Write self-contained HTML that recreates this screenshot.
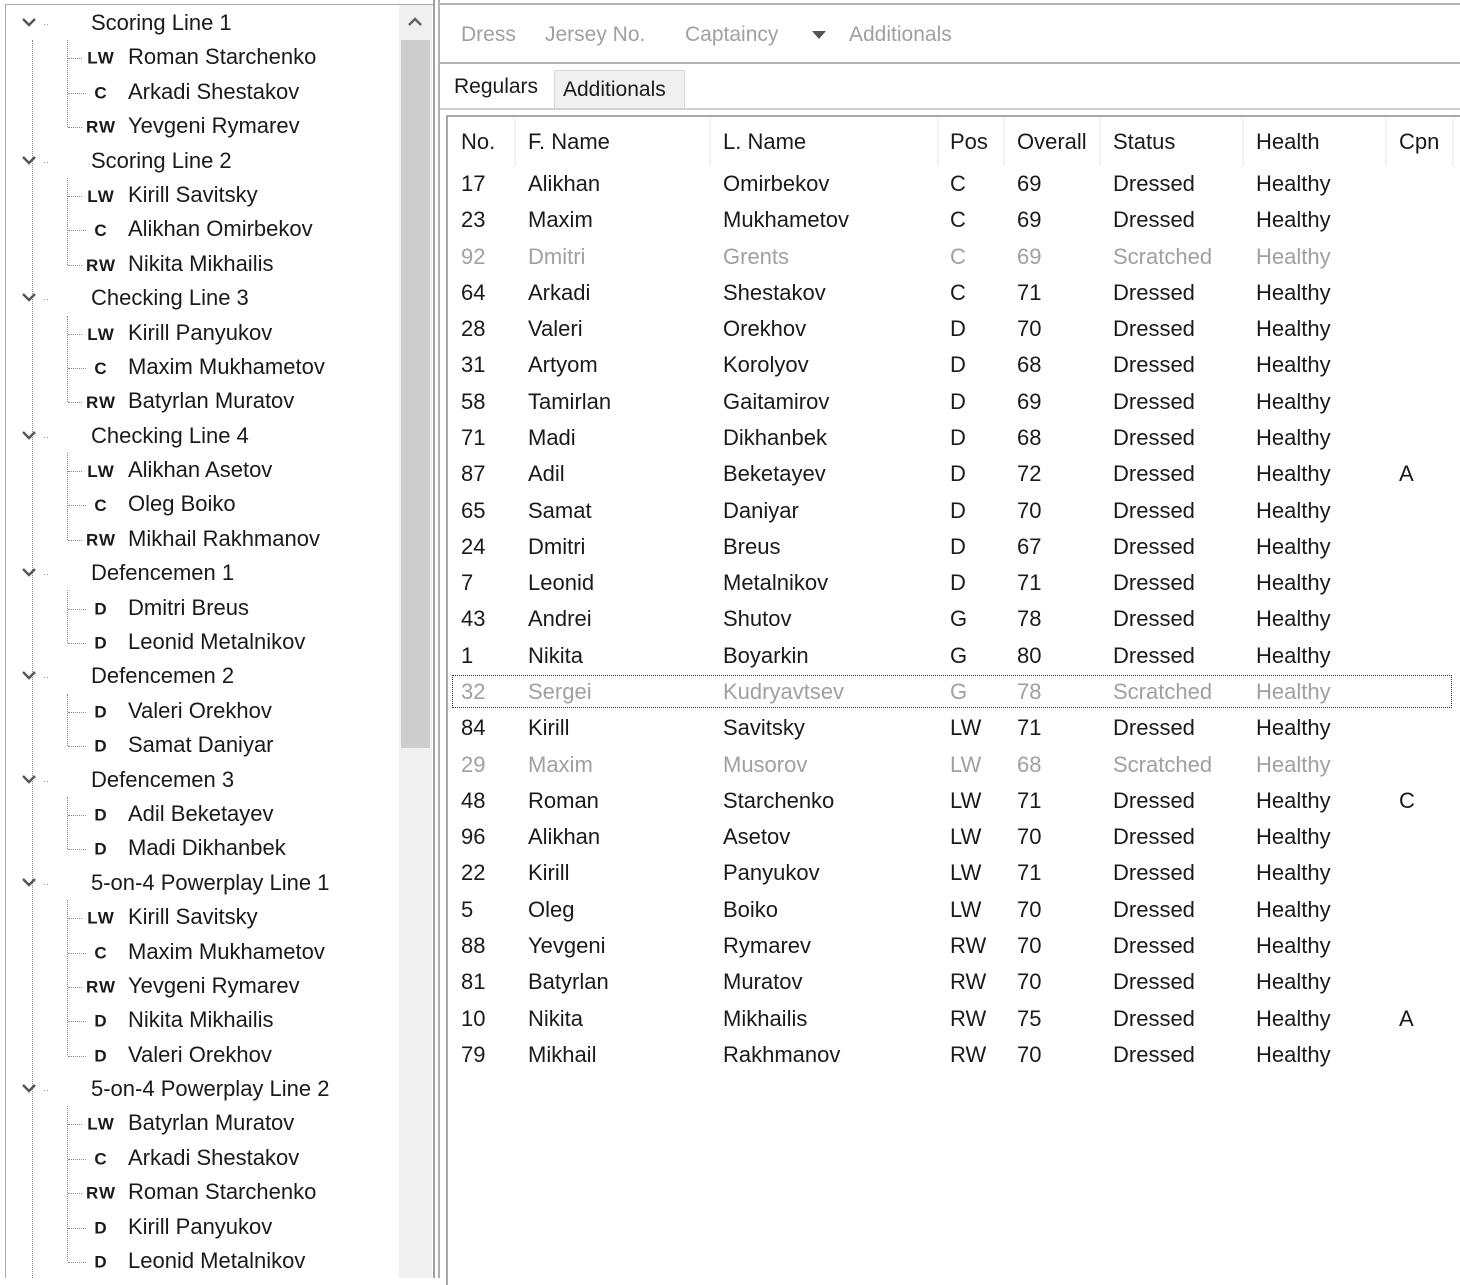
<!DOCTYPE html>
<html><head><meta charset="utf-8"><style>
*{margin:0;padding:0;box-sizing:border-box}
body{width:1460px;height:1278px;overflow:hidden;background:#fff;font-family:"Liberation Sans",sans-serif;color:#1a1a1a;position:relative}
.a{position:absolute;white-space:nowrap}
.t{font-size:22px;line-height:34px;height:34px}
.g{left:91px}
.n{left:128px}
.p{font-family:"Liberation Sans",sans-serif;font-weight:bold;font-size:17px;line-height:34px;width:36px;text-align:center;left:83px;letter-spacing:1px;transform:scaleY(0.95)}
.h{left:68px;width:18px;border-top:1px dotted #888}
.v{border-left:1px dotted #888;width:0}
.r{font-size:22px;line-height:36px;height:36px}
.gr{color:#a0a0a0}
</style></head><body>
<div class="a" style="left:5px;top:4px;width:429px;height:1274px;border:1px solid #a8a8a8;border-bottom:none"></div>
<div class="a" style="left:399px;top:5px;width:33px;height:1273px;background:#f0f0f0"></div>
<div class="a" style="left:401px;top:40px;width:29px;height:708px;background:#cdcdcd"></div>
<svg class="a" style="left:405px;top:14px" width="20" height="16"><path d="M4 11 L10 5 L16 11" stroke="#606060" stroke-width="2.5" fill="none"/></svg>
<div class="a" style="left:433px;top:0;width:2px;height:1278px;background:#a0a0a0"></div>
<div class="a v" style="left:32px;top:40px;height:1238px"></div>
<div class="a v" style="left:67px;top:40px;height:87px"></div>
<div class="a v" style="left:67px;top:178px;height:87px"></div>
<div class="a v" style="left:67px;top:316px;height:86px"></div>
<div class="a v" style="left:67px;top:453px;height:87px"></div>
<div class="a v" style="left:67px;top:590px;height:53px"></div>
<div class="a v" style="left:67px;top:694px;height:52px"></div>
<div class="a v" style="left:67px;top:797px;height:52px"></div>
<div class="a v" style="left:67px;top:900px;height:155px"></div>
<div class="a v" style="left:67px;top:1106px;height:155px"></div>

<div id="tree">
<div class="a t g" style="top:6px">Scoring Line 1</div>
<div class="a t g" style="top:144px">Scoring Line 2</div>
<div class="a t g" style="top:281px">Checking Line 3</div>
<div class="a t g" style="top:419px">Checking Line 4</div>
<div class="a t g" style="top:556px">Defencemen 1</div>
<div class="a t g" style="top:659px">Defencemen 2</div>
<div class="a t g" style="top:763px">Defencemen 3</div>
<div class="a t g" style="top:866px">5-on-4 Powerplay Line 1</div>
<div class="a t g" style="top:1072px">5-on-4 Powerplay Line 2</div>
<svg class="a" style="left:18px;top:0" width="40" height="1278">
<g stroke="#555" stroke-width="2.4" fill="none">
<path d="M5 19 L11 25 L17 19"/><path d="M5 157 L11 163 L17 157"/><path d="M5 294 L11 300 L17 294"/><path d="M5 432 L11 438 L17 432"/><path d="M5 569 L11 575 L17 569"/><path d="M5 672 L11 678 L17 672"/><path d="M5 776 L11 782 L17 776"/><path d="M5 879 L11 885 L17 879"/><path d="M5 1085 L11 1091 L17 1085"/>
</g>
<g fill="#999"><rect x="26" y="24" width="1" height="1"/><rect x="29" y="24" width="1" height="1"/><rect x="26" y="162" width="1" height="1"/><rect x="29" y="162" width="1" height="1"/><rect x="26" y="299" width="1" height="1"/><rect x="29" y="299" width="1" height="1"/><rect x="26" y="437" width="1" height="1"/><rect x="29" y="437" width="1" height="1"/><rect x="26" y="574" width="1" height="1"/><rect x="29" y="574" width="1" height="1"/><rect x="26" y="677" width="1" height="1"/><rect x="29" y="677" width="1" height="1"/><rect x="26" y="781" width="1" height="1"/><rect x="29" y="781" width="1" height="1"/><rect x="26" y="884" width="1" height="1"/><rect x="29" y="884" width="1" height="1"/><rect x="26" y="1090" width="1" height="1"/><rect x="29" y="1090" width="1" height="1"/></g>
</svg>
<div class="a h" style="top:58px"></div><div class="a h" style="top:93px"></div><div class="a h" style="top:127px"></div>
<div class="a h" style="top:196px"></div><div class="a h" style="top:230px"></div><div class="a h" style="top:265px"></div>
<div class="a h" style="top:334px"></div><div class="a h" style="top:368px"></div><div class="a h" style="top:402px"></div>
<div class="a h" style="top:471px"></div><div class="a h" style="top:505px"></div><div class="a h" style="top:540px"></div>
<div class="a h" style="top:609px"></div><div class="a h" style="top:643px"></div>
<div class="a h" style="top:712px"></div><div class="a h" style="top:746px"></div>
<div class="a h" style="top:815px"></div><div class="a h" style="top:849px"></div>
<div class="a h" style="top:918px"></div><div class="a h" style="top:953px"></div><div class="a h" style="top:987px"></div><div class="a h" style="top:1021px"></div><div class="a h" style="top:1056px"></div>
<div class="a h" style="top:1124px"></div><div class="a h" style="top:1159px"></div><div class="a h" style="top:1193px"></div><div class="a h" style="top:1228px"></div><div class="a h" style="top:1262px"></div>

<div class="a p" style="top:42px;background:#fff">LW</div><div class="a t n" style="top:40px">Roman Starchenko</div>
<div class="a p" style="top:77px">C</div><div class="a t n" style="top:75px">Arkadi Shestakov</div>
<div class="a p" style="top:111px;background:#fff">RW</div><div class="a t n" style="top:109px">Yevgeni Rymarev</div>
<div class="a p" style="top:180px;background:#fff">LW</div><div class="a t n" style="top:178px">Kirill Savitsky</div>
<div class="a p" style="top:214px">C</div><div class="a t n" style="top:212px">Alikhan Omirbekov</div>
<div class="a p" style="top:249px;background:#fff">RW</div><div class="a t n" style="top:247px">Nikita Mikhailis</div>
<div class="a p" style="top:318px;background:#fff">LW</div><div class="a t n" style="top:316px">Kirill Panyukov</div>
<div class="a p" style="top:352px">C</div><div class="a t n" style="top:350px">Maxim Mukhametov</div>
<div class="a p" style="top:386px;background:#fff">RW</div><div class="a t n" style="top:384px">Batyrlan Muratov</div>
<div class="a p" style="top:455px;background:#fff">LW</div><div class="a t n" style="top:453px">Alikhan Asetov</div>
<div class="a p" style="top:489px">C</div><div class="a t n" style="top:487px">Oleg Boiko</div>
<div class="a p" style="top:524px;background:#fff">RW</div><div class="a t n" style="top:522px">Mikhail Rakhmanov</div>
<div class="a p" style="top:593px">D</div><div class="a t n" style="top:591px">Dmitri Breus</div>
<div class="a p" style="top:627px">D</div><div class="a t n" style="top:625px">Leonid Metalnikov</div>
<div class="a p" style="top:696px">D</div><div class="a t n" style="top:694px">Valeri Orekhov</div>
<div class="a p" style="top:730px">D</div><div class="a t n" style="top:728px">Samat Daniyar</div>
<div class="a p" style="top:799px">D</div><div class="a t n" style="top:797px">Adil Beketayev</div>
<div class="a p" style="top:833px">D</div><div class="a t n" style="top:831px">Madi Dikhanbek</div>
<div class="a p" style="top:902px;background:#fff">LW</div><div class="a t n" style="top:900px">Kirill Savitsky</div>
<div class="a p" style="top:937px">C</div><div class="a t n" style="top:935px">Maxim Mukhametov</div>
<div class="a p" style="top:971px;background:#fff">RW</div><div class="a t n" style="top:969px">Yevgeni Rymarev</div>
<div class="a p" style="top:1005px">D</div><div class="a t n" style="top:1003px">Nikita Mikhailis</div>
<div class="a p" style="top:1040px">D</div><div class="a t n" style="top:1038px">Valeri Orekhov</div>
<div class="a p" style="top:1108px;background:#fff">LW</div><div class="a t n" style="top:1106px">Batyrlan Muratov</div>
<div class="a p" style="top:1143px">C</div><div class="a t n" style="top:1141px">Arkadi Shestakov</div>
<div class="a p" style="top:1177px;background:#fff">RW</div><div class="a t n" style="top:1175px">Roman Starchenko</div>
<div class="a p" style="top:1212px">D</div><div class="a t n" style="top:1210px">Kirill Panyukov</div>
<div class="a p" style="top:1246px">D</div><div class="a t n" style="top:1244px">Leonid Metalnikov</div>
</div>

<div class="a" style="left:438px;top:0;width:2px;height:1278px;background:#b0b0b0"></div>
<div class="a" style="left:438px;top:3px;width:1030px;height:61px;border:2px solid #b4b4b4;border-right:none"></div>
<div class="a" style="left:461px;top:18px;font-size:21px;line-height:34px;color:#a0a0a0">Dress</div>
<div class="a" style="left:545px;top:18px;font-size:21px;line-height:34px;color:#a0a0a0">Jersey No.</div>
<div class="a" style="left:685px;top:18px;font-size:21px;line-height:34px;color:#a0a0a0">Captaincy</div>
<svg class="a" style="left:811px;top:30px" width="16" height="10"><path d="M1 1 L15 1 L8 9Z" fill="#555"/></svg>
<div class="a" style="left:849px;top:18px;font-size:21px;line-height:34px;color:#a0a0a0">Additionals</div>
<div class="a" style="left:440px;top:108px;width:1020px;height:2px;background:#d0d0d0"></div>
<div class="a" style="left:554px;top:70px;width:131px;height:38px;background:#f0f0f0;border:1px solid #d8d8d8;border-bottom:none"></div>
<div class="a" style="left:454px;top:70px;font-size:21px;line-height:34px">Regulars</div>
<div class="a" style="left:563px;top:73px;font-size:21px;line-height:34px">Additionals</div>
<div class="a" style="left:446px;top:115px;width:1020px;height:1170px;border:2px solid #a8a8a8;border-right:none;border-bottom:none"></div>
<svg class="a" style="left:446px;top:118px" width="1014" height="50"><g stroke="#e4e4e4" stroke-width="1">
<path d="M69 0V48M264 0V48M492 0V48M558 0V48M654 0V48M797 0V48M940 0V48M1007 0V48"/></g></svg>
<div class="a r" style="top:124px;left:461px">No.</div>
<div class="a r" style="top:124px;left:528px">F. Name</div>
<div class="a r" style="top:124px;left:723px">L. Name</div>
<div class="a r" style="top:124px;left:950px">Pos</div>
<div class="a r" style="top:124px;left:1017px">Overall</div>
<div class="a r" style="top:124px;left:1113px">Status</div>
<div class="a r" style="top:124px;left:1256px">Health</div>
<div class="a r" style="top:124px;left:1399px">Cpn</div>
<div class="a" style="left:452px;top:675px;width:1000px;height:33px;border:1px dotted #333"></div>
<div id="rows">
<div class="a r" style="top:166px;left:461px">17</div><div class="a r" style="top:166px;left:528px">Alikhan</div><div class="a r" style="top:166px;left:723px">Omirbekov</div><div class="a r" style="top:166px;left:950px">C</div><div class="a r" style="top:166px;left:1017px">69</div><div class="a r" style="top:166px;left:1113px">Dressed</div><div class="a r" style="top:166px;left:1256px">Healthy</div>
<div class="a r" style="top:202px;left:461px">23</div><div class="a r" style="top:202px;left:528px">Maxim</div><div class="a r" style="top:202px;left:723px">Mukhametov</div><div class="a r" style="top:202px;left:950px">C</div><div class="a r" style="top:202px;left:1017px">69</div><div class="a r" style="top:202px;left:1113px">Dressed</div><div class="a r" style="top:202px;left:1256px">Healthy</div>
<div class="a r gr" style="top:239px;left:461px">92</div><div class="a r gr" style="top:239px;left:528px">Dmitri</div><div class="a r gr" style="top:239px;left:723px">Grents</div><div class="a r gr" style="top:239px;left:950px">C</div><div class="a r gr" style="top:239px;left:1017px">69</div><div class="a r gr" style="top:239px;left:1113px">Scratched</div><div class="a r gr" style="top:239px;left:1256px">Healthy</div>
<div class="a r" style="top:275px;left:461px">64</div><div class="a r" style="top:275px;left:528px">Arkadi</div><div class="a r" style="top:275px;left:723px">Shestakov</div><div class="a r" style="top:275px;left:950px">C</div><div class="a r" style="top:275px;left:1017px">71</div><div class="a r" style="top:275px;left:1113px">Dressed</div><div class="a r" style="top:275px;left:1256px">Healthy</div>
<div class="a r" style="top:311px;left:461px">28</div><div class="a r" style="top:311px;left:528px">Valeri</div><div class="a r" style="top:311px;left:723px">Orekhov</div><div class="a r" style="top:311px;left:950px">D</div><div class="a r" style="top:311px;left:1017px">70</div><div class="a r" style="top:311px;left:1113px">Dressed</div><div class="a r" style="top:311px;left:1256px">Healthy</div>
<div class="a r" style="top:347px;left:461px">31</div><div class="a r" style="top:347px;left:528px">Artyom</div><div class="a r" style="top:347px;left:723px">Korolyov</div><div class="a r" style="top:347px;left:950px">D</div><div class="a r" style="top:347px;left:1017px">68</div><div class="a r" style="top:347px;left:1113px">Dressed</div><div class="a r" style="top:347px;left:1256px">Healthy</div>
<div class="a r" style="top:384px;left:461px">58</div><div class="a r" style="top:384px;left:528px">Tamirlan</div><div class="a r" style="top:384px;left:723px">Gaitamirov</div><div class="a r" style="top:384px;left:950px">D</div><div class="a r" style="top:384px;left:1017px">69</div><div class="a r" style="top:384px;left:1113px">Dressed</div><div class="a r" style="top:384px;left:1256px">Healthy</div>
<div class="a r" style="top:420px;left:461px">71</div><div class="a r" style="top:420px;left:528px">Madi</div><div class="a r" style="top:420px;left:723px">Dikhanbek</div><div class="a r" style="top:420px;left:950px">D</div><div class="a r" style="top:420px;left:1017px">68</div><div class="a r" style="top:420px;left:1113px">Dressed</div><div class="a r" style="top:420px;left:1256px">Healthy</div>
<div class="a r" style="top:456px;left:461px">87</div><div class="a r" style="top:456px;left:528px">Adil</div><div class="a r" style="top:456px;left:723px">Beketayev</div><div class="a r" style="top:456px;left:950px">D</div><div class="a r" style="top:456px;left:1017px">72</div><div class="a r" style="top:456px;left:1113px">Dressed</div><div class="a r" style="top:456px;left:1256px">Healthy</div><div class="a r" style="top:456px;left:1399px">A</div>
<div class="a r" style="top:493px;left:461px">65</div><div class="a r" style="top:493px;left:528px">Samat</div><div class="a r" style="top:493px;left:723px">Daniyar</div><div class="a r" style="top:493px;left:950px">D</div><div class="a r" style="top:493px;left:1017px">70</div><div class="a r" style="top:493px;left:1113px">Dressed</div><div class="a r" style="top:493px;left:1256px">Healthy</div>
<div class="a r" style="top:529px;left:461px">24</div><div class="a r" style="top:529px;left:528px">Dmitri</div><div class="a r" style="top:529px;left:723px">Breus</div><div class="a r" style="top:529px;left:950px">D</div><div class="a r" style="top:529px;left:1017px">67</div><div class="a r" style="top:529px;left:1113px">Dressed</div><div class="a r" style="top:529px;left:1256px">Healthy</div>
<div class="a r" style="top:565px;left:461px">7</div><div class="a r" style="top:565px;left:528px">Leonid</div><div class="a r" style="top:565px;left:723px">Metalnikov</div><div class="a r" style="top:565px;left:950px">D</div><div class="a r" style="top:565px;left:1017px">71</div><div class="a r" style="top:565px;left:1113px">Dressed</div><div class="a r" style="top:565px;left:1256px">Healthy</div>
<div class="a r" style="top:601px;left:461px">43</div><div class="a r" style="top:601px;left:528px">Andrei</div><div class="a r" style="top:601px;left:723px">Shutov</div><div class="a r" style="top:601px;left:950px">G</div><div class="a r" style="top:601px;left:1017px">78</div><div class="a r" style="top:601px;left:1113px">Dressed</div><div class="a r" style="top:601px;left:1256px">Healthy</div>
<div class="a r" style="top:638px;left:461px">1</div><div class="a r" style="top:638px;left:528px">Nikita</div><div class="a r" style="top:638px;left:723px">Boyarkin</div><div class="a r" style="top:638px;left:950px">G</div><div class="a r" style="top:638px;left:1017px">80</div><div class="a r" style="top:638px;left:1113px">Dressed</div><div class="a r" style="top:638px;left:1256px">Healthy</div>
<div class="a r gr" style="top:674px;left:461px">32</div><div class="a r gr" style="top:674px;left:528px">Sergei</div><div class="a r gr" style="top:674px;left:723px">Kudryavtsev</div><div class="a r gr" style="top:674px;left:950px">G</div><div class="a r gr" style="top:674px;left:1017px">78</div><div class="a r gr" style="top:674px;left:1113px">Scratched</div><div class="a r gr" style="top:674px;left:1256px">Healthy</div>
<div class="a r" style="top:710px;left:461px">84</div><div class="a r" style="top:710px;left:528px">Kirill</div><div class="a r" style="top:710px;left:723px">Savitsky</div><div class="a r" style="top:710px;left:950px">LW</div><div class="a r" style="top:710px;left:1017px">71</div><div class="a r" style="top:710px;left:1113px">Dressed</div><div class="a r" style="top:710px;left:1256px">Healthy</div>
<div class="a r gr" style="top:747px;left:461px">29</div><div class="a r gr" style="top:747px;left:528px">Maxim</div><div class="a r gr" style="top:747px;left:723px">Musorov</div><div class="a r gr" style="top:747px;left:950px">LW</div><div class="a r gr" style="top:747px;left:1017px">68</div><div class="a r gr" style="top:747px;left:1113px">Scratched</div><div class="a r gr" style="top:747px;left:1256px">Healthy</div>
<div class="a r" style="top:783px;left:461px">48</div><div class="a r" style="top:783px;left:528px">Roman</div><div class="a r" style="top:783px;left:723px">Starchenko</div><div class="a r" style="top:783px;left:950px">LW</div><div class="a r" style="top:783px;left:1017px">71</div><div class="a r" style="top:783px;left:1113px">Dressed</div><div class="a r" style="top:783px;left:1256px">Healthy</div><div class="a r" style="top:783px;left:1399px">C</div>
<div class="a r" style="top:819px;left:461px">96</div><div class="a r" style="top:819px;left:528px">Alikhan</div><div class="a r" style="top:819px;left:723px">Asetov</div><div class="a r" style="top:819px;left:950px">LW</div><div class="a r" style="top:819px;left:1017px">70</div><div class="a r" style="top:819px;left:1113px">Dressed</div><div class="a r" style="top:819px;left:1256px">Healthy</div>
<div class="a r" style="top:855px;left:461px">22</div><div class="a r" style="top:855px;left:528px">Kirill</div><div class="a r" style="top:855px;left:723px">Panyukov</div><div class="a r" style="top:855px;left:950px">LW</div><div class="a r" style="top:855px;left:1017px">71</div><div class="a r" style="top:855px;left:1113px">Dressed</div><div class="a r" style="top:855px;left:1256px">Healthy</div>
<div class="a r" style="top:892px;left:461px">5</div><div class="a r" style="top:892px;left:528px">Oleg</div><div class="a r" style="top:892px;left:723px">Boiko</div><div class="a r" style="top:892px;left:950px">LW</div><div class="a r" style="top:892px;left:1017px">70</div><div class="a r" style="top:892px;left:1113px">Dressed</div><div class="a r" style="top:892px;left:1256px">Healthy</div>
<div class="a r" style="top:928px;left:461px">88</div><div class="a r" style="top:928px;left:528px">Yevgeni</div><div class="a r" style="top:928px;left:723px">Rymarev</div><div class="a r" style="top:928px;left:950px">RW</div><div class="a r" style="top:928px;left:1017px">70</div><div class="a r" style="top:928px;left:1113px">Dressed</div><div class="a r" style="top:928px;left:1256px">Healthy</div>
<div class="a r" style="top:964px;left:461px">81</div><div class="a r" style="top:964px;left:528px">Batyrlan</div><div class="a r" style="top:964px;left:723px">Muratov</div><div class="a r" style="top:964px;left:950px">RW</div><div class="a r" style="top:964px;left:1017px">70</div><div class="a r" style="top:964px;left:1113px">Dressed</div><div class="a r" style="top:964px;left:1256px">Healthy</div>
<div class="a r" style="top:1001px;left:461px">10</div><div class="a r" style="top:1001px;left:528px">Nikita</div><div class="a r" style="top:1001px;left:723px">Mikhailis</div><div class="a r" style="top:1001px;left:950px">RW</div><div class="a r" style="top:1001px;left:1017px">75</div><div class="a r" style="top:1001px;left:1113px">Dressed</div><div class="a r" style="top:1001px;left:1256px">Healthy</div><div class="a r" style="top:1001px;left:1399px">A</div>
<div class="a r" style="top:1037px;left:461px">79</div><div class="a r" style="top:1037px;left:528px">Mikhail</div><div class="a r" style="top:1037px;left:723px">Rakhmanov</div><div class="a r" style="top:1037px;left:950px">RW</div><div class="a r" style="top:1037px;left:1017px">70</div><div class="a r" style="top:1037px;left:1113px">Dressed</div><div class="a r" style="top:1037px;left:1256px">Healthy</div>
</div>
</body></html>
